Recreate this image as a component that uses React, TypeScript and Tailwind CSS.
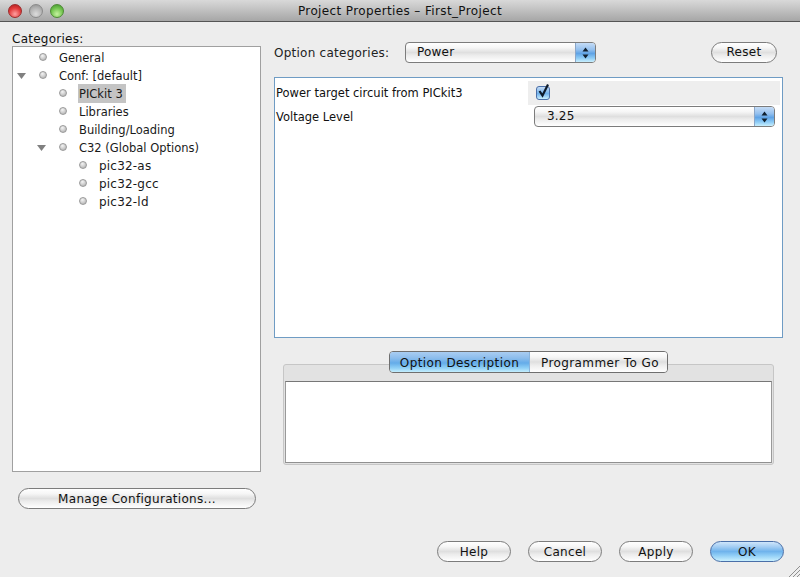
import React from "react";

const font = "font-['DejaVu_Sans',sans-serif]";

const gel =
  "bg-[linear-gradient(to_bottom,#ffffff_0%,#f6f6f6_25%,#dfdfdf_50%,#ececec_65%,#ffffff_100%)]";

type TreeItem = {
  label: string;
  depth: number;
  open?: boolean;
  selected?: boolean;
  wide?: boolean;
};

const tree: TreeItem[] = [
  { label: "General", depth: 0 },
  { label: "Conf: [default]", depth: 0, open: true },
  { label: "PICkit 3", depth: 1, selected: true },
  { label: "Libraries", depth: 1 },
  { label: "Building/Loading", depth: 1 },
  { label: "C32 (Global Options)", depth: 1, open: true },
  { label: "pic32-as", depth: 2, wide: true },
  { label: "pic32-gcc", depth: 2, wide: true },
  { label: "pic32-ld", depth: 2, wide: true },
];

const depthPad = ["pl-[4px]", "pl-[24px]", "pl-[44px]"];

const TreeRow: React.FC<{ item: TreeItem }> = ({ item }) => (
  <div className={`flex h-[18px] items-center ${depthPad[item.depth]}`}>
    <div className="flex w-[22px] justify-start">
      {item.open && (
        <svg className="mt-[2px]" width="9" height="6" viewBox="0 0 9 6">
          <path d="M0 0H9L4.5 6Z" fill="#808080" />
        </svg>
      )}
    </div>
    <div className="-mt-[1px] mr-[12px] h-[8px] w-[8px] rounded-full border border-[#9a9a9a] bg-[radial-gradient(circle_at_40%_30%,#f4f4f4,#a9a9a9)]" />
    <span
      className={`pt-[1px] leading-[18px] text-[#1a1a1a] ${
        item.wide ? "text-[12px] tracking-[0.2px]" : "text-[11.5px]"
      } ${item.selected ? "-ml-[1px] bg-[#c4c4c4] pl-[1px] pr-[3px]" : ""}`}
    >
      {item.label}
    </span>
  </div>
);

const Button: React.FC<{ label: string; className?: string; primary?: boolean }> = ({
  label,
  className = "",
  primary,
}) => (
  <div
    className={`flex h-[21px] items-center justify-center rounded-full border text-[12px] tracking-[0.3px] text-[#111] ${
      primary
        ? "border-[#4a6fa8] bg-[linear-gradient(to_bottom,#cfe6fb_0%,#a3cdf3_25%,#6fb3ec_50%,#8fcdf6_70%,#c9f0fe_100%)]"
        : `border-[#7c7c7c] ${gel}`
    } ${className}`}
  >
    {label}
  </div>
);

const Select: React.FC<{ value: string; className?: string; textPad: string }> = ({
  value,
  className = "",
  textPad,
}) => (
  <div
    className={`flex h-[21px] items-stretch overflow-hidden rounded-[4px] border border-[#7c7c7c] ${gel} ${className}`}
  >
    <div className={`flex-1 text-[12px] leading-[18px] tracking-[0.2px] text-[#111] ${textPad}`}>
      {value}
    </div>
    <div className="flex w-[20px] items-center justify-center border-l border-l-[#8aa6c8] bg-[linear-gradient(to_bottom,#c5dcf6_0%,#94c0ee_35%,#5fa3e6_55%,#8fcdf6_80%,#c9effd_100%)]">
      <svg width="7" height="12" viewBox="0 0 7 12">
        <path d="M3.5 0.5L6.5 4.5H0.5Z M3.5 11.5L0.5 7.5H6.5Z" fill="#10202f" />
      </svg>
    </div>
  </div>
);

const Light: React.FC<{ className: string }> = ({ className }) => (
  <div className={`h-[14px] w-[14px] rounded-full border ${className}`} />
);

export default function App() {
  return (
    <div
      className={`relative flex h-[577px] w-[800px] flex-col overflow-hidden bg-[#ededed] ${font}`}
    >
      {/* title bar */}
      <div className="relative flex h-[22px] items-center justify-center border-b border-b-[#555] bg-[linear-gradient(to_bottom,#d9d9d9,#a6a6a6)] pt-[1px]">
        <div className="absolute left-[8px] top-[4px] flex gap-[7px]">
          <Light className="border-[#9c2b2b] bg-[radial-gradient(circle_at_50%_75%,#ffa0a0,#e23b3b_55%,#a81c1c)]" />
          <Light className="border-[#8a8a8a] bg-[radial-gradient(circle_at_50%_75%,#dcdcdc,#b4b4b4_55%,#8e8e8e)]" />
          <Light className="border-[#4d8a34] bg-[radial-gradient(circle_at_50%_75%,#c6f2a0,#72c44e_55%,#3f8f2c)]" />
        </div>
        <span className="text-[12px] tracking-[0.37px] text-[#111]">Project Properties – First_Project</span>
      </div>

      <div className="flex">
        {/* left column */}
        <div className="ml-[12px] w-[249px]">
          <div className="mt-[9px] h-[15px] text-[12px] leading-[16px] tracking-[0.25px] text-[#111]">
            Categories:
          </div>
          <div className="h-[426px] border border-[#a0a0a0] bg-white pt-[1px]">
            {tree.map((item) => (
              <TreeRow key={item.label} item={item} />
            ))}
          </div>
          <Button label="Manage Configurations..." className="ml-[6px] mt-[16px] w-[238px]" />
        </div>

        {/* right column */}
        <div className="ml-[13px] w-[509px]">
          <div className="mt-[19px] flex items-center">
            <span className="w-[131px] pt-[2px] text-[12px] tracking-[0.25px] text-[#222]">Option categories:</span>
            <Select value="Power" className="mt-[1px] w-[191px]" textPad="pl-[11px]" />
            <Button label="Reset" className="ml-[115px] w-[66px]" />
          </div>

          <div className="mt-[14px] h-[261px] border border-[#6f9cc4] bg-white pr-[2px] pt-[3px]">
            <div className="flex h-[24px] items-center">
              <span className="w-[253px] pl-[1px] pt-[1px] text-[11.5px] text-[#111]">
                Power target circuit from PICkit3
              </span>
              <div className="flex h-full flex-1 items-center bg-[#eeeeee] pl-[8px]">
                <div className="relative h-[14px] w-[14px] rounded-[3px] border border-[#4a6fa8] bg-[linear-gradient(to_bottom,#c5dcf6,#6fb0ea_55%,#c9effd)]">
                  <svg className="absolute -top-[4px] left-[0px]" width="14" height="15" viewBox="0 0 14 15">
                    <path d="M2.5 8L5.5 12.5L11 1.5" fill="none" stroke="#0d1a2a" strokeWidth="2.2" />
                  </svg>
                </div>
              </div>
            </div>
            <div className="mt-[1px] flex items-center">
              <span className="w-[259px] pl-[1px] pt-[2px] text-[11.5px] text-[#111]">Voltage Level</span>
              <Select value="3.25" className="w-[241px]" textPad="pl-[12px]" />
            </div>
          </div>

          {/* tabs */}
          <div className="relative z-10 ml-[115px] mt-[13px] flex h-[22px] w-[279px] overflow-hidden rounded-[4px] border border-[#6f6f6f] text-[12px] tracking-[0.4px] text-[#111]">
            <div className="flex w-[140px] items-center justify-center border-r border-r-[#8ab4dc] bg-[linear-gradient(to_bottom,#a9cdf2_0%,#8dbdec_30%,#64ace9_55%,#8fd0f6_80%,#c4eefd_100%)] pt-[1px]">
              Option Description
            </div>
            <div className={`flex flex-1 items-center justify-center pl-[3px] pt-[1px] ${gel}`}>Programmer To Go</div>
          </div>
          <div className="-mt-[9px] ml-[9px] h-[101px] w-[491px] rounded-[3px] border border-[#c6c6c6] bg-[#e2e2e2] px-[1px] pt-[16px]">
            <div className="h-[82px] border border-[#777] border-x-[#999] border-b-[#909090] bg-white" />
          </div>
        </div>
      </div>

      {/* footer buttons */}
      <div className="absolute left-[437px] top-[541px] flex gap-[17px]">
        <Button label="Help" className="w-[74px]" />
        <Button label="Cancel" className="w-[74px]" />
        <Button label="Apply" className="w-[74px]" />
        <Button label="OK" className="w-[74px]" primary />
      </div>

      {/* resize grip */}
      <svg className="absolute bottom-0 right-0" width="12" height="12" viewBox="0 0 12 12">
        <path d="M1 12L12 1M5 12L12 5M9 12L12 9" stroke="#8f8f8f" strokeWidth="1" />
      </svg>
    </div>
  );
}
